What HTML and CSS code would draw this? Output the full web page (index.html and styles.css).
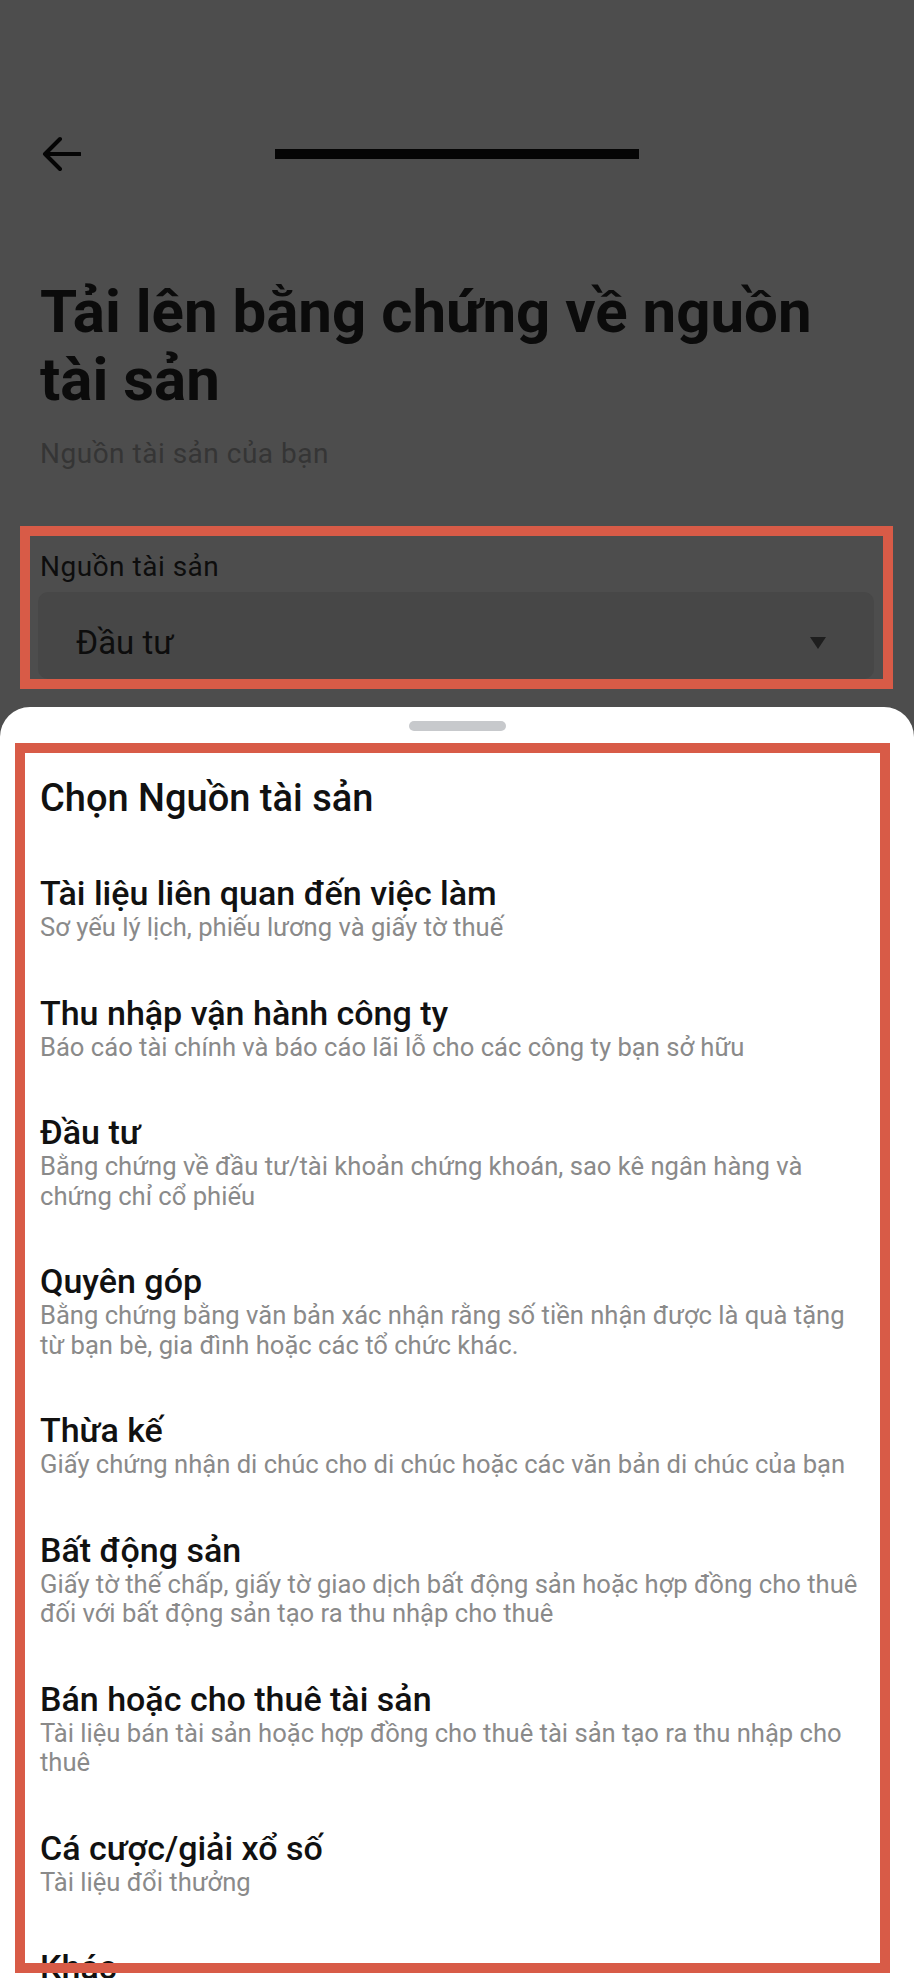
FILE: index.html
```html
<!DOCTYPE html>
<html lang="vi">
<head>
<meta charset="utf-8">
<title>Tải lên bằng chứng về nguồn tài sản</title>
<link rel="stylesheet" href="styles.css">
</head>
<body>
<div class="page">
  <header class="nav">
    <svg class="back" viewBox="0 0 40 40" width="40" height="40" aria-hidden="true">
      <path d="M4 20 H39 M19 5 L4 20 L19 35" fill="none" stroke="#050505" stroke-width="4" stroke-linecap="round" stroke-linejoin="round"/>
    </svg>
    <div class="progress"></div>
  </header>

  <h1 class="title">Tải lên bằng chứng về nguồn tài sản</h1>
  <p class="subtitle">Nguồn tài sản của bạn</p>

  <section class="source annot">
    <div class="label">Nguồn tài sản</div>
    <div class="field">
      <span class="field-value">Đầu tư</span>
      <span class="caret"></span>
    </div>
  </section>

  <section class="sheet">
    <div class="handle"></div>
    <div class="choose annot">
      <h2 class="sheet-title">Chọn Nguồn tài sản</h2>
      <ul class="options">
        <li class="option">
          <div class="opt-title">Tài liệu liên quan đến việc làm</div>
          <div class="opt-desc">Sơ yếu lý lịch, phiếu lương và giấy tờ thuế</div>
        </li>
        <li class="option">
          <div class="opt-title">Thu nhập vận hành công ty</div>
          <div class="opt-desc">Báo cáo tài chính và báo cáo lãi lỗ cho các công ty bạn sở hữu</div>
        </li>
        <li class="option">
          <div class="opt-title">Đầu tư</div>
          <div class="opt-desc">Bằng chứng về đầu tư/tài khoản chứng khoán, sao kê ngân hàng và chứng chỉ cổ phiếu</div>
        </li>
        <li class="option">
          <div class="opt-title">Quyên góp</div>
          <div class="opt-desc">Bằng chứng bằng văn bản xác nhận rằng số tiền nhận được là quà tặng từ bạn bè, gia đình hoặc các tổ chức khác.</div>
        </li>
        <li class="option">
          <div class="opt-title">Thừa kế</div>
          <div class="opt-desc">Giấy chứng nhận di chúc cho di chúc hoặc các văn bản di chúc của bạn</div>
        </li>
        <li class="option">
          <div class="opt-title">Bất động sản</div>
          <div class="opt-desc">Giấy tờ thế chấp, giấy tờ giao dịch bất động sản hoặc hợp đồng cho thuê đối với bất động sản tạo ra thu nhập cho thuê</div>
        </li>
        <li class="option">
          <div class="opt-title">Bán hoặc cho thuê tài sản</div>
          <div class="opt-desc">Tài liệu bán tài sản hoặc hợp đồng cho thuê tài sản tạo ra thu nhập cho thuê</div>
        </li>
        <li class="option">
          <div class="opt-title">Cá cược/giải xổ số</div>
          <div class="opt-desc">Tài liệu đổi thưởng</div>
        </li>
        <li class="option">
          <div class="opt-title">Khác</div>
        </li>
      </ul>
    </div>
  </section>
</div>
</body>
</html>
```

FILE: styles.css
```css
* { box-sizing: border-box; }

html, body {
  margin: 0;
  padding: 0;
  width: 914px;
  height: 1978px;
  overflow: hidden;
  background: #4d4d4d;
  font-family: Roboto, "Noto Sans", "Liberation Sans", sans-serif;
}

.page {
  width: 914px;
}

.nav {
  display: flex;
  align-items: center;
  height: 40px;
  margin-top: 134px;
  padding-left: 41px;
}

.back {
  display: block;
  flex: none;
}

.progress {
  width: 364px;
  height: 10px;
  margin-left: 194px;
  background: #050505;
}

.title {
  margin: 104px 0 0;
  padding: 0 64px 0 40px;
  font-size: 60px;
  line-height: 68px;
  font-weight: 700;
  color: #0b0b0b;
}

.subtitle {
  margin: 24px 0 0;
  padding: 0 40px;
  font-size: 28px;
  line-height: 32px;
  letter-spacing: 0.5px;
  color: #353535;
}

.annot {
  position: relative;
}

.annot::after {
  content: "";
  position: absolute;
  inset: 0;
  border: 10px solid #d85b47;
  pointer-events: none;
}

.source {
  margin: 56px 21px 0 20px;
  padding: 25px 19px 10px 18px;
}

.label {
  padding-left: 2px;
  font-size: 28px;
  line-height: 32px;
  letter-spacing: 0.5px;
  color: #0d0d0d;
}

.field {
  display: flex;
  align-items: center;
  justify-content: space-between;
  height: 87px;
  margin-top: 9px;
  padding: 0 48px 0 38px;
  border-radius: 10px;
  background: #474747;
}

.field-value {
  margin-top: 14px;
  font-size: 33px;
  line-height: 38px;
  color: #0d0d0d;
}

.caret {
  width: 0;
  height: 0;
  margin-top: 15px;
  border-left: 8.5px solid transparent;
  border-right: 8.5px solid transparent;
  border-top: 12px solid #1e1e1e;
}

.sheet {
  margin-top: 18px;
  padding-top: 14px;
  height: 1300px;
  background: #ffffff;
  border-radius: 30px 30px 0 0;
}

.handle {
  width: 97px;
  height: 10px;
  margin: 0 auto;
  border-radius: 5px;
  background: #c7c9cc;
}

.choose {
  height: 1230px;
  margin: 12px 24px 0 15px;
  padding: 33px 22px 0 25px;
}

.sheet-title {
  margin: 0;
  font-size: 38px;
  line-height: 44px;
  font-weight: 500;
  color: #111111;
}

.options {
  list-style: none;
  margin: 55px 0 0;
  padding: 0;
  display: flex;
  flex-direction: column;
  gap: 52px;
}

.opt-title {
  font-size: 34px;
  line-height: 36px;
  font-weight: 500;
  color: #111111;
}

.opt-desc {
  margin-top: 2px;
  font-size: 25.6px;
  line-height: 29.5px;
  color: #8a8a8a;
}
```
